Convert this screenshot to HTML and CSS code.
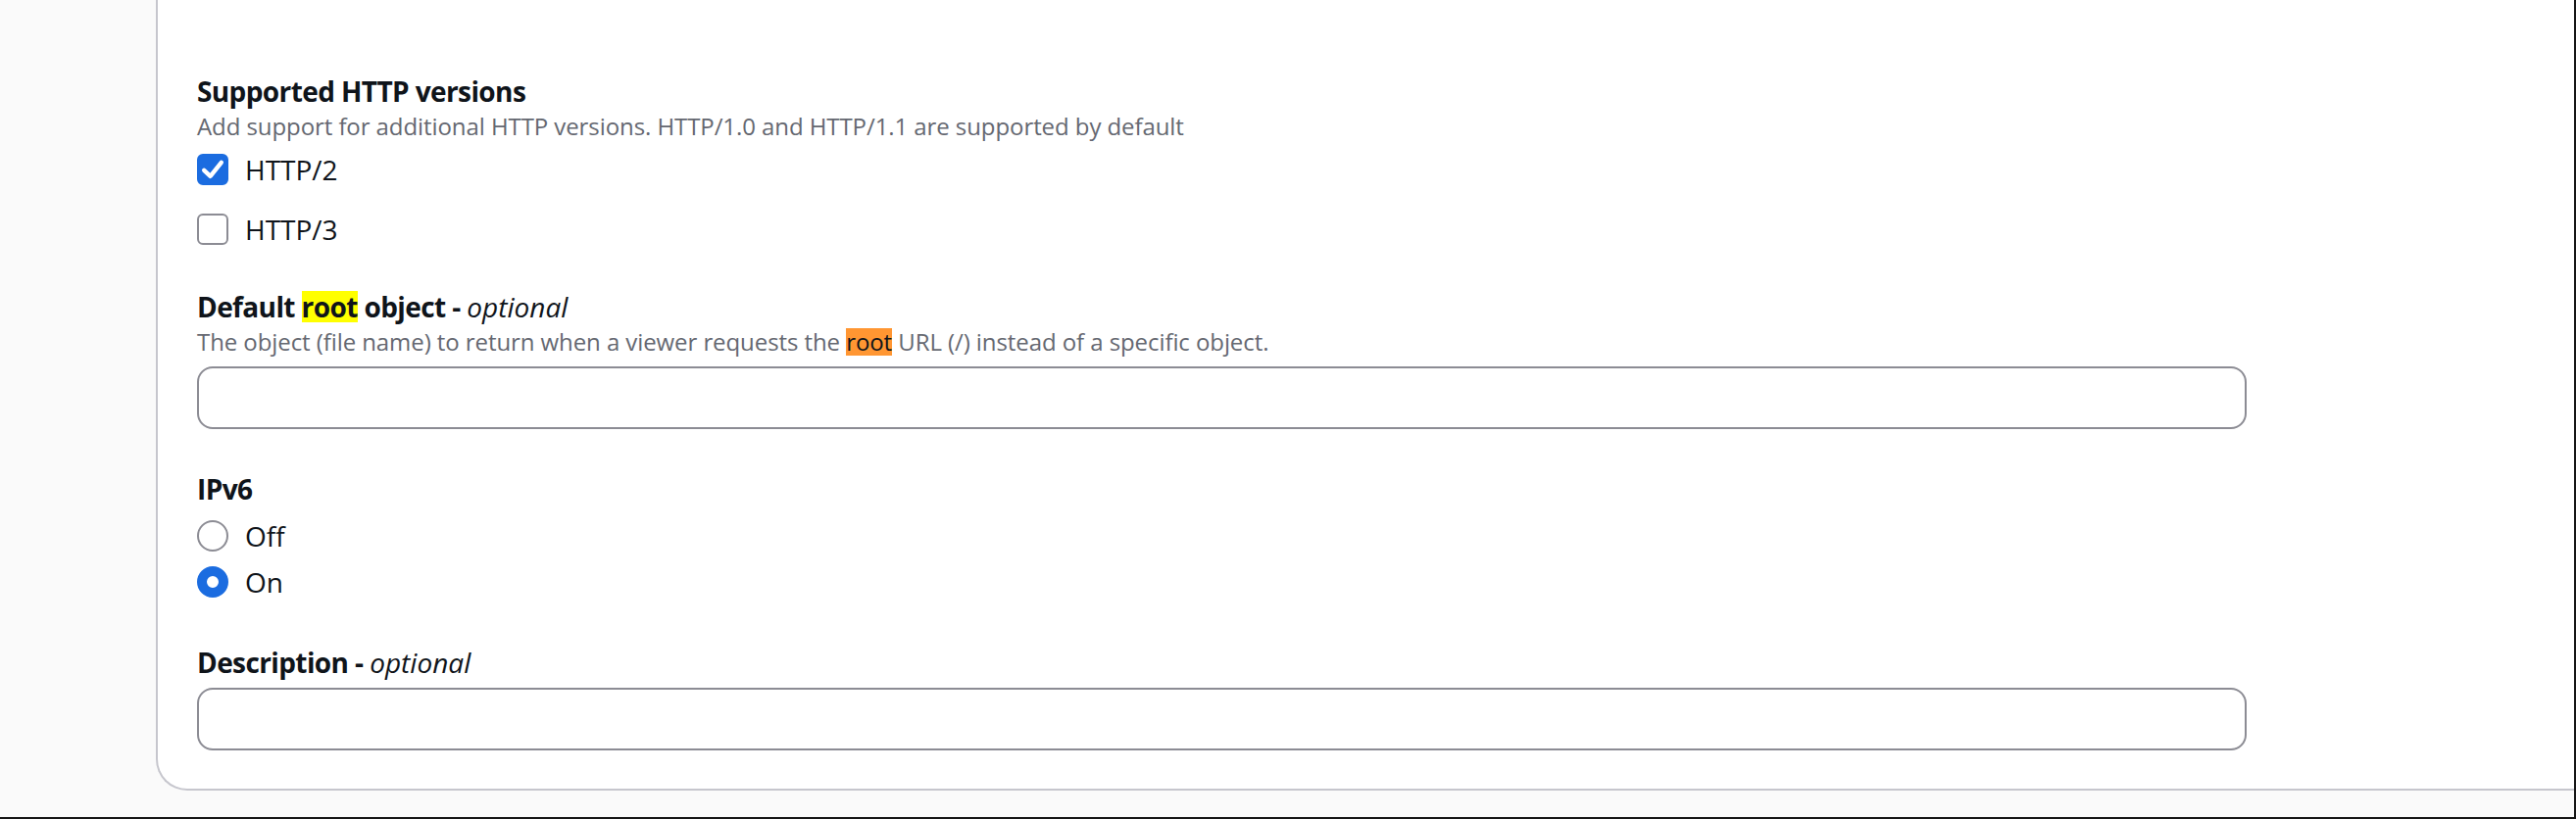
FILE: index.html
```html
<!DOCTYPE html>
<html lang="en">
<head>
<meta charset="utf-8">
<title>Distribution settings</title>
<link rel="stylesheet" href="styles.css">
</head>
<body>
<div class="frame">
  <div class="card">
    <div class="field">
      <div class="label">Supported HTTP versions</div>
      <div class="desc">Add support for additional HTTP versions. HTTP/1.0 and HTTP/1.1 are supported by default</div>
      <div class="choices checks">
        <label class="choice">
          <span class="box checked">
            <svg viewBox="0 0 16 16" width="32" height="32"><polyline points="3.6,8.4 6.8,11.4 12.4,4.4" fill="none" stroke="#fff" stroke-width="2.2" stroke-linecap="round" stroke-linejoin="round"/></svg>
          </span>
          <span class="choice-text">HTTP/2</span>
        </label>
        <label class="choice">
          <span class="box"></span>
          <span class="choice-text">HTTP/3</span>
        </label>
      </div>
    </div>

    <div class="field">
      <div class="label">Default <span class="hl hl-yellow">root</span> object - <i class="optional">optional</i></div>
      <div class="desc">The object (file name) to return when a viewer requests the <span class="hl hl-orange">root</span> URL (/) instead of a specific object.</div>
      <div class="input"></div>
    </div>

    <div class="field field-radios">
      <div class="label">IPv6</div>
      <div class="choices radios">
        <label class="choice">
          <span class="radio"></span>
          <span class="choice-text">Off</span>
        </label>
        <label class="choice">
          <span class="radio on"></span>
          <span class="choice-text">On</span>
        </label>
      </div>
    </div>

    <div class="field field-last">
      <div class="label">Description - <i class="optional">optional</i></div>
      <div class="input input-tight"></div>
    </div>
  </div>
</div>
</body>
</html>
```
FILE: styles.css
```css
html, body {
  margin: 0;
  padding: 0;
}

body {
  background: #fafafa;
  overflow: hidden;
  font-family: "Open Sans", "Noto Sans", sans-serif;
  color: #0f141a;
}

.frame {
  width: 2628px;
  height: 836px;
  box-sizing: border-box;
  border-right: 2px solid #161616;
  border-bottom: 2px solid #161616;
  padding-left: 159px;
  display: flex;
  flex-direction: column;
  overflow: hidden;
}

.card {
  background: #ffffff;
  border-left: 2px solid #c6c6cd;
  border-bottom: 2px solid #c6c6cd;
  border-bottom-left-radius: 32px;
  padding: 75px 0 39px 40px;
  display: flex;
  flex-direction: column;
}

.field {
  display: flex;
  flex-direction: column;
  margin-bottom: 43px;
}

.field-radios {
  margin-bottom: 46px;
}

.field-last {
  margin-bottom: 0;
}

.label {
  font-size: 28px;
  line-height: 36px;
  font-weight: 700;
  letter-spacing: -0.6px;
  color: #0f141a;
  white-space: nowrap;
}

.optional {
  font-weight: 400;
  font-style: italic;
  letter-spacing: 0;
}

.desc {
  margin-top: 2px;
  font-size: 24px;
  line-height: 32px;
  color: #656871;
  letter-spacing: -0.08px;
  white-space: nowrap;
}

.hl {
  display: inline-block;
  color: #0f141a;
}

.label .hl {
  line-height: 32px;
}

.desc .hl {
  line-height: 28px;
}

.hl-yellow {
  background: #ffff00;
}

.hl-orange {
  background: #ff9632;
}

.choices {
  display: flex;
  flex-direction: column;
}

.checks {
  margin-top: 10px;
  gap: 25px;
}

.radios {
  margin-top: 12px;
  gap: 11px;
}

.choice {
  display: flex;
  align-items: flex-start;
  gap: 17px;
}

.choice-text {
  font-size: 28px;
  line-height: 36px;
  color: #0f141a;
}

.box {
  width: 32px;
  height: 32px;
  box-sizing: border-box;
  margin-top: 2px;
  border: 2px solid #8c8c94;
  border-radius: 6px;
  background: #ffffff;
  flex: none;
  display: flex;
}

.box.checked {
  border-color: #1b6ce0;
  background: #1b6ce0;
}

.box svg {
  margin: -2px;
}

.radio {
  width: 32px;
  height: 32px;
  box-sizing: border-box;
  margin-top: 2px;
  border: 2px solid #8c8c94;
  border-radius: 50%;
  background: #ffffff;
  flex: none;
}

.radio.on {
  border: 10px solid #1b6ce0;
}

.input {
  margin-top: 9px;
  width: 2091px;
  height: 64px;
  box-sizing: border-box;
  border: 2px solid #8c8c94;
  border-radius: 16px;
  background: #ffffff;
}

.input-tight {
  margin-top: 8px;
}
```
